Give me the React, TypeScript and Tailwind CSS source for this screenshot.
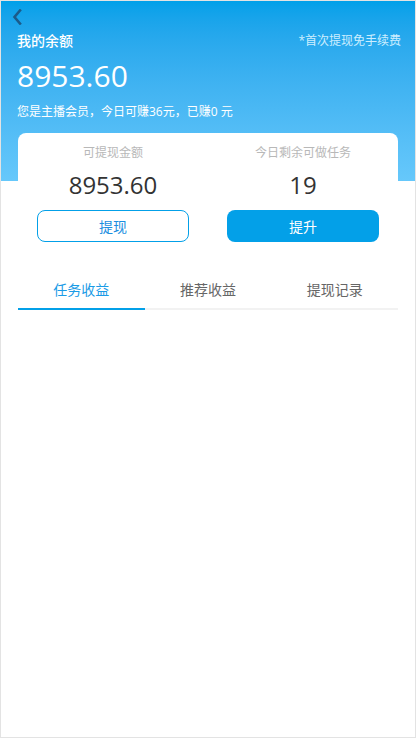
import React from "react";

export default function App() {
  const tabs = ["任务收益", "推荐收益", "提现记录"];
  return (
    <div className="w-[416px] h-[738px] border border-[#e3e3e3] bg-white font-['Open_Sans','Noto_Sans_CJK_SC',sans-serif] overflow-hidden">
      <div className="h-[180px] bg-gradient-to-b from-[#00a0e9] to-[#66c8fb] px-[16px]">
        <div className="h-[32px] flex items-center">
          <svg width="10" height="16" viewBox="0 0 10 16" className="ml-[-5px]">
            <polyline points="8,1.5 2.5,8 8,14.5" fill="none" stroke="#1b5b8a" strokeWidth="2.6" strokeLinecap="square" />
          </svg>
        </div>
        <div className="h-[20px] -mt-[2px] flex items-center justify-between">
          <span className="text-[14px] text-white font-medium leading-[20px]">我的余额</span>
          <span className="text-[12px] text-[#cdeeff] leading-[20px] mr-[-2px]">*首次提现免手续费</span>
        </div>
        <div className="mt-[5px] h-[40px] text-[30px] leading-[40px] text-white">8953.60</div>
        <div className="mt-[7px] text-[12px] leading-[18px] text-white">您是主播会员，今日可赚36元，已赚0 元</div>
      </div>
      <div className="mx-[17px] -mt-[48px] bg-white rounded-t-[8px]">
        <div className="grid grid-cols-2">
          <div className="flex flex-col items-center px-[19px]">
            <div className="mt-[11px] h-[18px] text-[12px] leading-[18px] text-[#b8b8b8]">可提现金额</div>
            <div className="mt-[8px] h-[30px] text-[24px] leading-[30px] text-[#333333]">8953.60</div>
            <button className="mt-[10px] w-full h-[32px] rounded-[8px] border border-[#03a0e8] text-[#1a8ee0] text-[14px] bg-white">提现</button>
          </div>
          <div className="flex flex-col items-center px-[19px]">
            <div className="mt-[11px] h-[18px] text-[12px] leading-[18px] text-[#b8b8b8]">今日剩余可做任务</div>
            <div className="mt-[8px] h-[30px] text-[24px] leading-[30px] text-[#333333]">19</div>
            <button className="mt-[10px] w-full h-[32px] rounded-[8px] bg-[#03a0e8] text-white text-[14px]">提升</button>
          </div>
        </div>
        <div className="mt-[28px] flex">
          {tabs.map((t, i) => (
            <div
              key={t}
              className={
                i === 0
                  ? "flex-1 h-[40px] flex items-center justify-center text-[14px] text-[#1a9be6] border-b-2 border-[#03a0e8]"
                  : "flex-1 h-[40px] flex items-center justify-center text-[14px] text-[#666666] border-b-2 border-[#f2f2f2]"
              }
            >
              {t}
            </div>
          ))}
        </div>
      </div>
    </div>
  );
}
